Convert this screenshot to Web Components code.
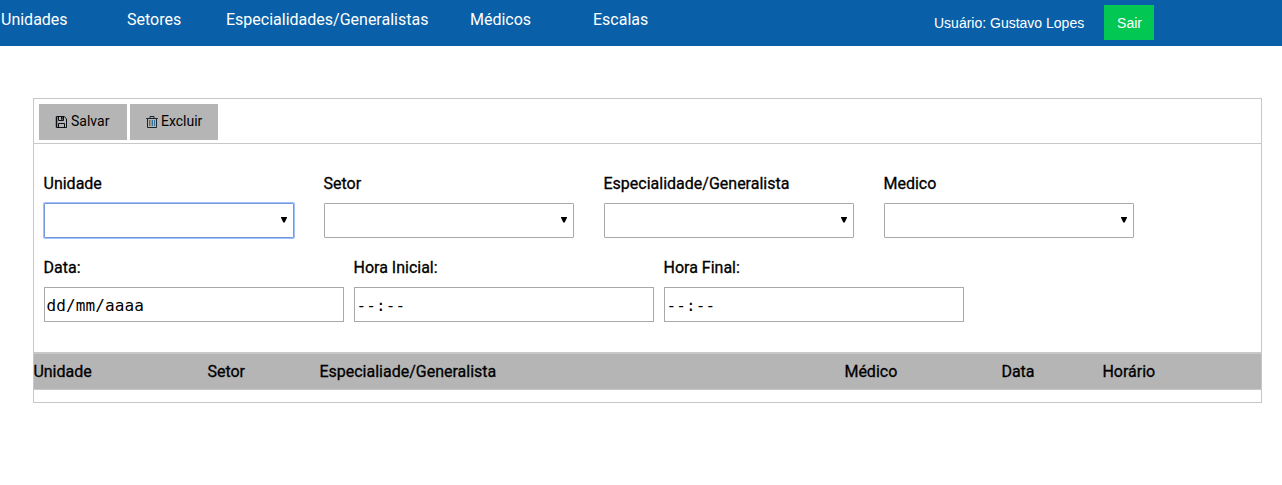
<!DOCTYPE html>
<html lang="pt-BR">
<head>
<meta charset="utf-8">
<title>Escalas</title>
<style>
body{margin:0;background:#fff;color:#000;font:16px/20px Roboto,sans-serif}
</style>
</head>
<body>
<app-bar>
  <nav-link style="width:126px">Unidades</nav-link>
  <nav-link style="width:99px">Setores</nav-link>
  <nav-link style="width:244px">Especialidades/Generalistas</nav-link>
  <nav-link style="width:123px">Médicos</nav-link>
  <nav-link>Escalas</nav-link>
  <span slot="user">Usuário: Gustavo Lopes</span>
  <span slot="exit">Sair</span>
</app-bar>
<schedule-panel>
  <tool-button slot="tools" icon="save">Salvar</tool-button>
  <tool-button slot="tools" icon="trash">Excluir</tool-button>
  <field-row style="--gap:30px">
    <select-field active>Unidade</select-field>
    <select-field>Setor</select-field>
    <select-field>Especialidade/Generalista</select-field>
    <select-field>Medico</select-field>
  </field-row>
  <field-row style="--gap:10px">
    <time-field value="dd/mm/aaaa">Data:</time-field>
    <time-field value="--:--">Hora Inicial:</time-field>
    <time-field value="--:--">Hora Final:</time-field>
  </field-row>
  <table-head slot="table">
    <span>Unidade</span><span>Setor</span><span>Especialiade/Generalista</span><span>Médico</span><span>Data</span><span>Horário</span>
  </table-head>
</schedule-panel>
<script>
const define = (name, html) => {
  const template = document.createElement('template');
  template.innerHTML = html;
  customElements.define(name, class extends HTMLElement {
    constructor() {
      super();
      this.attachShadow({mode: 'open'}).append(template.content.cloneNode(true));
    }
    connectedCallback() {
      const value = this.shadowRoot.querySelector('.value');
      if (value) value.textContent = this.getAttribute('value');
    }
  });
};

define('app-bar', `<style>
:host{display:flex;box-sizing:border-box;height:46px;background:#0960a8;color:#fff}
nav{display:flex;width:934px;padding:10px 0 0 1px;box-sizing:border-box}
.user{font:14px/17px "Liberation Sans",Arial,sans-serif;width:170px;padding-top:15px;white-space:nowrap}
.exit{font:14px/36px "Liberation Sans",Arial,sans-serif;width:50px;height:35px;margin-top:5px;background:#02c853;text-align:center;text-indent:1px}
</style><nav><slot></slot></nav><div class="user"><slot name="user"></slot></div><div class="exit"><slot name="exit"></slot></div>`);

define('nav-link', `<style>:host{display:block;white-space:nowrap}</style><slot></slot>`);

define('schedule-panel', `<style>
:host{display:block;box-sizing:border-box;width:1229px;height:305px;margin:52px 0 0 33px;border:1px solid #c8c8c8}
.tools{display:flex;gap:3px;height:44px;box-sizing:border-box;padding:5px 0 0 5px}
.form{box-sizing:border-box;height:210px;border-top:1px solid #c8c8c8;padding:30px 0 0 10px;display:flex;flex-direction:column;gap:19px}
.table{margin-top:-1px}
</style><div class="tools"><slot name="tools"></slot></div><div class="form"><slot></slot></div><div class="table"><slot name="table"></slot></div>`);

define('tool-button', `<style>
:host{display:flex;box-sizing:border-box;width:88px;height:36px;padding:0 0 0 16px;background:#b5b5b5;font-size:14px;line-height:35px}
svg{display:none;width:12px;height:12px;margin:12px 4px 0 0;flex:none}
:host([icon=trash]) svg{margin-right:3px}
:host([icon=save]) .save,:host([icon=trash]) .trash{display:block}
</style>
<svg class="save" viewBox="0 0 12 12" fill="none" stroke="#0c1014"><path d="M1.5.5h7.7l2.3 2.3v8.7h-10z"/><path d="M3.5 1v3.5h5V1M3.5 11.5v-4h6v4" /><path d="M6.8 1v2.8" stroke-width="1.6"/><path d="M.5.5v11" stroke="#a8783c" stroke-opacity=".7"/><path d="M2.5 1v10" stroke="#5c91b8"/></svg>
<svg class="trash" viewBox="0 0 12 12" fill="none" stroke="#18242e"><path d="M.3 2.5h11.4M4 2.5v-2h4v2M1.5 2.5v9h9v-9"/><path d="M3.5 4v6M6.5 4v6M8.5 4v6" stroke="#35739f"/><path d="M5 4v6" stroke="#9d7552"/></svg>
<span><slot></slot></span>`);

define('field-row', `<style>:host{display:flex;gap:var(--gap);height:65px}</style><slot></slot>`);

define('select-field', `<style>
:host{display:block;width:250px}
label{display:block;height:29px;margin-left:-.5px;-webkit-text-stroke:.3px #000;white-space:nowrap}
.box{height:35px;box-sizing:border-box;border:1px solid #a9a9a9;border-radius:1px;display:flex;justify-content:flex-end;padding:13px 6px 0 0}
:host([active]) .box{border-color:#7396dc;box-shadow:0 0 0 1px #9fc2f8}
svg{width:6px;height:6px}
</style><label><slot></slot></label><div class="box"><svg viewBox="0 0 6 6"><path d="M0 0h6v.8L3.7 5.6H2.3L0 .8z"/></svg></div>`);

define('time-field', `<style>
:host{display:block;width:300px}
label{display:block;height:29px;margin-left:-.5px;-webkit-text-stroke:.3px #000;white-space:nowrap}
.value{height:35px;box-sizing:border-box;border:1px solid #a9a9a9;padding-left:1.6px;font:16px/35px "DejaVu Sans Mono",monospace;letter-spacing:.1px}
</style><label><slot></slot></label><div class="value"></div>`);

define('table-head', `<style>
:host{display:grid;grid-template-columns:174px 112px 525px 157px 101px 1fr;box-sizing:border-box;height:38px;border-top:2px solid #c8c8c8;border-bottom:1px solid #c8c8c8;background:#b5b5b5;line-height:35px;text-indent:-.6px;-webkit-text-stroke:.3px #000;white-space:nowrap}
</style><slot></slot>`);
</script>
</body>
</html>
